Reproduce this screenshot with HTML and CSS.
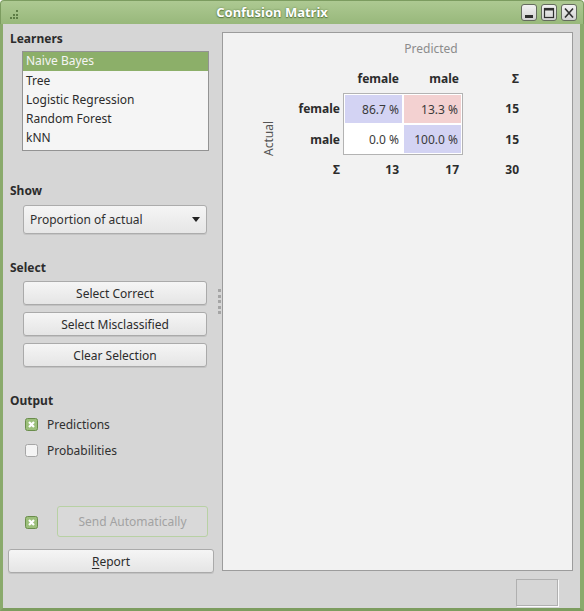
FILE: index.html
```html
<!DOCTYPE html>
<html>
<head>
<meta charset="utf-8">
<link rel="stylesheet" href="styles.css">
</head>
<body>
<div class="window">
  <div class="titlebar">
    <div class="tb-icon">
      <svg width="10" height="10" viewBox="0 0 10 10">
        <g fill="#5d7d45">
          <rect x="7" y="0" width="2" height="2"/>
          <rect x="4" y="4" width="2" height="2"/><rect x="7" y="4" width="2" height="2"/>
          <rect x="1" y="7" width="2" height="2"/><rect x="4" y="7" width="2" height="2"/><rect x="7" y="7" width="2" height="2"/>
        </g>
      </svg>
    </div>
    <div class="tb-title">Confusion Matrix</div>
    <div class="tb-buttons">
      <span class="tb-btn"><svg width="14" height="15" viewBox="0 0 14 15"><rect x="3" y="10" width="8" height="3" fill="#2f2f2f"/></svg></span>
      <span class="tb-btn"><svg width="14" height="15" viewBox="0 0 14 15"><rect x="2.5" y="3.5" width="9" height="9" fill="none" stroke="#2f2f2f" stroke-width="1.2"/><rect x="2.5" y="3" width="9" height="2.5" fill="#2f2f2f"/></svg></span>
      <span class="tb-btn"><svg width="14" height="15" viewBox="0 0 14 15"><path d="M3 3.5 L11 12.5 M11 3.5 L3 12.5" stroke="#2f2f2f" stroke-width="1.6" fill="none"/></svg></span>
    </div>
  </div>
  <div class="body">
    <div class="main">
      <div class="left">
        <div class="hdr hdr-first">Learners</div>
        <ul class="list">
          <li class="sel">Naive Bayes</li>
          <li>Tree</li>
          <li>Logistic Regression</li>
          <li>Random Forest</li>
          <li>kNN</li>
        </ul>
        <div class="hdr hdr-show">Show</div>
        <div class="combo">
          <span>Proportion of actual</span>
          <svg class="arrow" width="8" height="5" viewBox="0 0 8 5"><path d="M0 0 L8 0 L4 5 Z" fill="#222"/></svg>
        </div>
        <div class="hdr hdr-select">Select</div>
        <div class="btns">
          <div class="btn">Select Correct</div>
          <div class="btn">Select Misclassified</div>
          <div class="btn">Clear Selection</div>
        </div>
        <div class="hdr hdr-output">Output</div>
        <div class="check check-first">
          <svg width="13" height="13" viewBox="0 0 13 13"><rect x="0.5" y="0.5" width="12" height="12" rx="2" fill="#9cbf7b" stroke="#6a8d4c"/><path d="M4 4 L9 9 M9 4 L4 9" stroke="#fff" stroke-width="2.2"/></svg>
          <span>Predictions</span>
        </div>
        <div class="check check-second">
          <svg width="13" height="13" viewBox="0 0 13 13"><rect x="0.5" y="0.5" width="12" height="12" rx="2" fill="#f4f4f4" stroke="#a6a6a6"/></svg>
          <span>Probabilities</span>
        </div>
        <div class="auto">
          <svg width="13" height="13" viewBox="0 0 13 13"><rect x="0.5" y="0.5" width="12" height="12" rx="2" fill="#9cbf7b" stroke="#6a8d4c"/><path d="M4 4 L9 9 M9 4 L4 9" stroke="#fff" stroke-width="2.2"/></svg>
          <div class="btn btn-disabled">Send Automatically</div>
        </div>
        <div class="btn report"><u>R</u>eport</div>
      </div>
      <div class="splitter"><i></i><i></i><i></i><i></i><i></i></div>
      <div class="panel">
        <div class="matrix">
          <div class="m-pred">Predicted</div>
          <div class="m-h m-c1">female</div>
          <div class="m-h m-c2">male</div>
          <div class="m-h m-sum">Σ</div>
          <div class="m-actual">Actual</div>
          <div class="m-h m-lbl m-r3">female</div>
          <div class="m-h m-lbl m-r4">male</div>
          <div class="frame">
            <div class="cell blue">86.7 %</div>
            <div class="cell red">13.3 %</div>
            <div class="cell white">0.0 %</div>
            <div class="cell blue">100.0 %</div>
          </div>
          <div class="m-h m-sum m-r3">15</div>
          <div class="m-h m-sum m-r4">15</div>
          <div class="m-h m-lbl m-r5">Σ</div>
          <div class="m-h m-c1 m-r5">13</div>
          <div class="m-h m-c2 m-r5">17</div>
          <div class="m-h m-sum m-r5">30</div>
        </div>
      </div>
    </div>
    <div class="status"><div class="status-box"></div></div>
  </div>
</div>
</body>
</html>
```

FILE: styles.css
```css
html, body {
  margin: 0;
  padding: 0;
}
body {
  font-family: "Noto Sans", "DejaVu Sans", sans-serif;
  font-size: 12px;
  color: #303030;
}
.window {
  width: 584px;
  height: 611px;
  display: flex;
  flex-direction: column;
}
.titlebar {
  height: 24px;
  box-sizing: border-box;
  background: linear-gradient(#adc992, #98b87b);
  border: 1px solid #7c9c60;
  border-bottom: none;
  border-radius: 4px 4px 0 0;
  display: flex;
  align-items: center;
}
.tb-icon {
  width: 10px;
  height: 10px;
  margin-left: 8px;
  margin-top: -2px;
}
.tb-title {
  flex: 1;
  text-align: center;
  color: #fff;
  font-weight: bold;
  font-size: 13px;
  line-height: 16px;
  margin-top: -2px;
  text-shadow: 0 0 2px #5c7a44, 0 1px 1px #5c7a44;
  padding-left: 4px;
}
.tb-buttons {
  display: flex;
  gap: 4px;
  margin-right: 6px;
  margin-top: -1px;
}
.tb-btn {
  width: 16px;
  height: 17px;
  box-sizing: border-box;
  border: 1px solid #646b5e;
  border-radius: 3px;
  background: linear-gradient(#f2f2f2, #d2d2d2);
  display: flex;
  align-items: center;
  justify-content: center;
}
.body {
  flex: 1;
  background: #d6d6d6;
  border-left: 3px solid #8aaa6c;
  border-right: 4px solid #8aaa6c;
  border-bottom: 3px solid #7d9d60;
  display: flex;
  flex-direction: column;
}
.main {
  height: 549px;
  display: flex;
  align-items: flex-start;
  padding-left: 5px;
}
.left {
  width: 206px;
  display: flex;
  flex-direction: column;
}
.hdr {
  font-weight: bold;
  line-height: 16px;
  padding-left: 2px;
  color: #2c2c2c;
}
.hdr-first { margin-top: 7px; }
.hdr-show { margin-top: 32px; }
.hdr-select { margin-top: 26px; }
.hdr-output { margin-top: 26px; }
.list {
  list-style: none;
  margin: 4px 0 0 14px;
  padding: 0;
  width: 187px;
  height: 100px;
  box-sizing: border-box;
  border: 1px solid #939393;
  background: #f5f5f5;
}
.list li {
  height: 19px;
  line-height: 19px;
  padding-left: 3px;
  color: #2c2c2c;
}
.list li.sel {
  background: #8caf69;
  color: #f4f4f4;
  line-height: 17px;
  height: 19px;
}
.combo {
  margin: 6px 0 0 15px;
  width: 184px;
  height: 29px;
  box-sizing: border-box;
  border: 1px solid #acacac;
  border-radius: 3px;
  background: linear-gradient(#f5f5f5, #e6e6e6);
  box-shadow: 0 1px 0 #c4c4c4;
  display: flex;
  align-items: center;
  justify-content: space-between;
  padding: 0 6px 0 6px;
}
.btns {
  margin: 5px 0 0 15px;
  display: flex;
  flex-direction: column;
  gap: 7px;
}
.btn {
  height: 24px;
  box-sizing: border-box;
  border: 1px solid #aaaaaa;
  border-radius: 3px;
  background: linear-gradient(#f5f5f5, #e5e5e5);
  box-shadow: 0 1px 0 #c2c2c2;
  display: flex;
  align-items: center;
  justify-content: center;
  color: #2c2c2c;
  width: 184px;
}
.check {
  height: 20px;
  display: flex;
  align-items: center;
  margin-left: 17px;
  gap: 9px;
}
.check-first { margin-top: 5px; }
.check-second { margin-top: 6px; }
.auto {
  margin-top: 46px;
  margin-left: 17px;
  display: flex;
  align-items: center;
  gap: 19px;
}
.auto svg {
  margin-top: 1px;
}
.btn-disabled {
  width: 151px;
  height: 31px;
  border: 1px solid #b8d1a4;
  background: #d9d9d9;
  box-shadow: none;
  color: #a2a2a2;
}
.report {
  margin-top: 12px;
  width: 206px;
  height: 24px;
}
.report u {
  text-decoration-thickness: 1px;
  text-underline-offset: 2px;
}
.splitter {
  width: 8px;
  align-self: stretch;
  display: flex;
  flex-direction: column;
  align-items: flex-start;
  padding-top: 265px;
  box-sizing: border-box;
  gap: 2.5px;
}
.splitter i {
  display: block;
  width: 3px;
  height: 3px;
  margin-left: 4px;
  background: #a5a5a5;
}
.panel {
  margin-top: 8px;
  width: 351px;
  height: 539px;
  box-sizing: border-box;
  border: 1px solid #9c9c9c;
  background: #f2f2f2;
}
.matrix {
  margin-left: 35px;
  display: grid;
  grid-template-columns: 20px 62px 3px 59px 2px 59px 56px;
  grid-template-rows: 30px 30px 31px 31px 29px;
  align-items: center;
}
.m-pred {
  grid-row: 1;
  grid-column: 4 / 8;
  text-align: center;
  color: #8c8c8c;
}
.m-h {
  font-weight: bold;
  text-align: right;
  grid-row: 2;
  color: #2c2c2c;
}
.m-c1 { grid-column: 4; padding-right: 3px; }
.m-c2 { grid-column: 6; padding-right: 4px; }
.m-sum { grid-column: 7; }
.m-lbl { grid-column: 2; }
.m-r3 { grid-row: 3; }
.m-r4 { grid-row: 4; }
.m-r5 { grid-row: 5; }
.m-actual {
  grid-column: 1;
  grid-row: 3 / 6;
  writing-mode: vertical-rl;
  transform: rotate(180deg);
  justify-self: center;
  align-self: center;
  color: #555;
}
.frame {
  grid-column: 4 / 7;
  grid-row: 3 / 5;
  align-self: stretch;
  box-sizing: border-box;
  border: 1px solid #b3b3b3;
  padding: 1px;
  background: #fff;
  display: grid;
  grid-template-columns: 57px 57px;
  grid-template-rows: 28px 28px;
  gap: 2px;
}
.cell {
  display: flex;
  align-items: center;
  justify-content: flex-end;
  padding-right: 3px;
  color: #3a3a3a;
}
.cell.blue { background: #d3d3f3; }
.cell.red { background: #f3d1d1; }
.cell.white { background: #fff; }
.status {
  height: 35px;
  display: flex;
  justify-content: flex-end;
}
.status-box {
  margin-top: 6px;
  margin-right: 22px;
  width: 42px;
  height: 27px;
  box-sizing: border-box;
  border: 1px solid #b0b0b0;
  box-shadow: 1px 1px 0 #fafafa;
}
```
